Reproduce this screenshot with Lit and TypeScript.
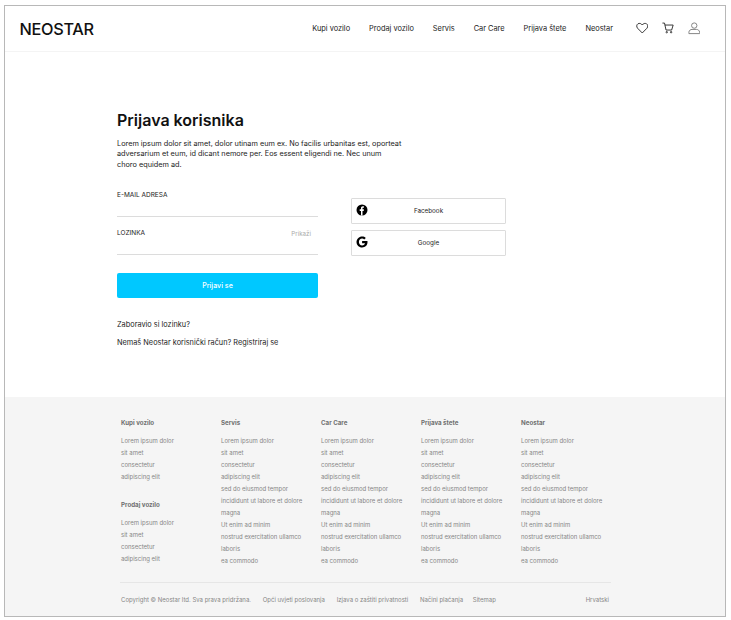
import { LitElement, html, css, svg } from 'lit';
import { customElement } from 'lit/decorators.js';

const NAV = ['Kupi vozilo', 'Prodaj vozilo', 'Servis', 'Car Care', 'Prijava štete', 'Neostar'];
const SHORT = ['Lorem ipsum dolor', 'sit amet', 'consectetur', 'adipiscing elit'];
const LONG = [
  ...SHORT,
  'sed do eiusmod tempor',
  'incididunt ut labore et dolore',
  'magna',
  'Ut enim ad minim',
  'nostrud exercitation ullamco',
  'laboris',
  'ea commodo',
];
const LEGAL = ['Opći uvjeti poslovanja', 'Izjava o zaštiti privatnosti', 'Načini plaćanja', 'Sitemap'];

const heart = svg`<path d="M7 12.300 1.800 7C.3 5.400.6 3 2.200 2c1.700-.9 3.600-.4 4.800 1.300C8.200 1.600 10.100 1.100 11.800 2c1.600 1 1.900 3.400.4 5z"/>`;
const cart = svg`<path d="M.5 1.200h2.300l1.700 7.800h6.300L12.500 3.400H3.300"/><circle cx="5.300" cy="11.400" r=".8"/><circle cx="10.200" cy="11.400" r=".8"/>`;
const user = svg`<circle cx="7" cy="4" r="3"/><path d="M1 13v-1.500C1 9.400 3 8.300 4.500 8.300h5c1.500 0 3.500 1.100 3.500 3.200V13z"/>`;

@customElement('app-root')
export class AppRoot extends LitElement {
  static styles = css`
    :host {
      display: block;
      font-family: Inter, 'Liberation Sans', sans-serif;
      color: #111;
    }
    .frame {
      box-sizing: border-box;
      width: 722px;
      height: 612px;
      margin: 5px 0 0 4px;
      border: 1px solid #b8b8b8;
      display: flex;
      flex-direction: column;
      background: #fff;
    }
    header {
      box-sizing: border-box;
      height: 46px;
      flex: none;
      display: flex;
      align-items: center;
      padding: 0 25px 0 14.500px;
      border-bottom: 1px solid #f4f4f4;
    }
    .logo {
      font-size: 16.300px;
      font-weight: 500;
      letter-spacing: -0.3px;
      margin-right: auto;
    }
    nav {
      display: flex;
      gap: 19px;
      font-size: 7.400px;
      color: #222;
    }
    .icons {
      display: flex;
      gap: 13.500px;
      margin-left: 22.500px;
    }
    .icons svg {
      width: 12.500px;
      height: 12.500px;
      fill: none;
      stroke-width: 1;
    }
    .dark { stroke: #222; }
    .pale { stroke: #777; }
    main {
      flex: 1;
      padding: 57px 0 0 112px;
    }
    h1 {
      margin: 0;
      font-size: 16px;
      line-height: 22px;
      font-weight: 600;
      color: #111;
    }
    .intro {
      margin: 8px 0 0;
      width: 285px;
      font-size: 7.300px;
      line-height: 10.400px;
      color: #222;
    }
    .columns {
      display: flex;
      gap: 33px;
      margin-top: 20px;
    }
    .form {
      width: 201px;
    }
    .field {
      box-sizing: border-box;
      height: 38px;
      padding-top: 12px;
      border-bottom: 1px solid #dcdcdc;
      display: flex;
      justify-content: space-between;
      align-items: flex-start;
      font-size: 6.500px;
      line-height: 9px;
      color: #222;
    }
    .first { height: 27px; padding-top: 1px; }
    .show {
      font-size: 6.200px;
      color: #aaa;
      margin-right: 7px;
    }
    .submit {
      display: block;
      box-sizing: border-box;
      width: 100%;
      height: 25px;
      margin: 18px 0 0;
      padding: 0;
      border: 0;
      border-radius: 2px;
      background: #00c8ff;
      color: #fff;
      font: 500 7.100px Inter, sans-serif;
    }
    .link {
      font-size: 7.350px;
      line-height: 11px;
      color: #222;
    }
    .forgot { margin-top: 21px; }
    .register { margin-top: 7px; }
    .social {
      width: 155px;
      margin-top: 8px;
      display: flex;
      flex-direction: column;
      gap: 6.500px;
    }
    .social-btn {
      box-sizing: border-box;
      height: 25.500px;
      position: relative;
      display: flex;
      align-items: center;
      justify-content: center;
      border: 1px solid #dcdcdc;
      border-radius: 1px;
      font-size: 6.300px;
      color: #222;
    }
    .social-btn svg {
      position: absolute;
      left: 3.500px;
      top: 5px;
      width: 12px;
      height: 12px;
    }
    footer {
      box-sizing: border-box;
      flex: none;
      height: 219px;
      background: #f5f5f5;
      padding: 20px 0 0 116px;
      color: #868686;
      font-size: 6px;
    }
    .cols {
      display: grid;
      grid-template-columns: repeat(5, 100px);
    }
    h4 {
      margin: 0 0 6px;
      font-size: 6.200px;
      line-height: 12px;
      font-weight: 700;
      color: #707070;
    }
    .item { line-height: 12px; }
    .stack .group + .group { margin-top: 16px; }
    .bottom {
      box-sizing: border-box;
      width: 491px;
      height: 35px;
      margin: 14.500px 0 0 -1px;
      padding: 0 2px 0 1px;
      border-top: 1px solid #e6e6e6;
      display: flex;
      align-items: center;
      gap: 11.700px;
    }
    .bottom span:nth-child(5) { margin-left: -2px; }
    .lang { margin-left: auto; }
  `;

  private group(title: string, items: string[]) {
    return html`<div class="group">
      <h4>${title}</h4>
      ${items.map((i) => html`<div class="item">${i}</div>`)}
    </div>`;
  }

  protected render() {
    return html`
      <div class="frame">
        <header>
          <div class="logo">NEOSTAR</div>
          <nav>${NAV.map((n) => html`<span>${n}</span>`)}</nav>
          <div class="icons">
            <svg class="dark" viewBox="0 0 14 14">${heart}</svg>
            <svg class="dark" viewBox="0 0 14 14">${cart}</svg>
            <svg class="pale" viewBox="0 0 14 14">${user}</svg>
          </div>
        </header>
        <main>
          <h1>Prijava korisnika</h1>
          <p class="intro">
            Lorem ipsum dolor sit amet, dolor utinam eum ex. No facilis urbanitas est, oporteat
            adversarium et eum, id dicant nemore per. Eos essent eligendi ne. Nec unum
            choro equidem ad.
          </p>
          <div class="columns">
            <div class="form">
              <div class="field first"><span>E-MAIL ADRESA</span></div>
              <div class="field"><span>LOZINKA</span><span class="show">Prikaži</span></div>
              <button class="submit">Prijavi se</button>
              <div class="link forgot">Zaboravio si lozinku?</div>
              <div class="link register">Nemaš Neostar korisnički račun? Registriraj se</div>
            </div>
            <div class="social">
              <div class="social-btn">
                <svg viewBox="0 0 12 12">
                  <circle cx="6" cy="6" r="5.500" fill="#000" />
                  <path fill="#fff" d="M5 11.400V7H3.700V5.300H5V4.100C5 2.900 5.700 2.200 6.800 2.200c.5 0 .9 0 1.100.1v1.500h-.7c-.6 0-.7.3-.7.7v.8h1.400L7.700 7H6.500v4.400z" />
                </svg>
                Facebook
              </div>
              <div class="social-btn">
                <svg viewBox="0 0 12 12">
                  <path fill="#000" d="M6.100 0.500c1.500 0 2.700.5 3.700 1.400L8.200 3.400c-.5-.4-1.200-.8-2.100-.8-1.800 0-3.200 1.500-3.200 3.400s1.400 3.400 3.200 3.400c1.700 0 2.700-1 2.900-2.200H6.100V5.100h5.300c.1.300.1.600.1 1 0 3.300-2.200 5.400-5.400 5.400C3 11.500.5 9 .5 6S3 .5 6.100.5z" />
                </svg>
                Google
              </div>
            </div>
          </div>
        </main>
        <footer>
          <div class="cols">
            <div class="stack">
              ${this.group('Kupi vozilo', SHORT)}
              ${this.group('Prodaj vozilo', SHORT)}
            </div>
            ${this.group('Servis', LONG)}
            ${this.group('Car Care', LONG)}
            ${this.group('Prijava štete', LONG)}
            ${this.group('Neostar', LONG)}
          </div>
          <div class="bottom">
            <span>Copyright © Neostar ltd. Sva prava pridržana.</span>
            ${LEGAL.map((l) => html`<span>${l}</span>`)}
            <span class="lang">Hrvatski</span>
          </div>
        </footer>
      </div>
    `;
  }
}
